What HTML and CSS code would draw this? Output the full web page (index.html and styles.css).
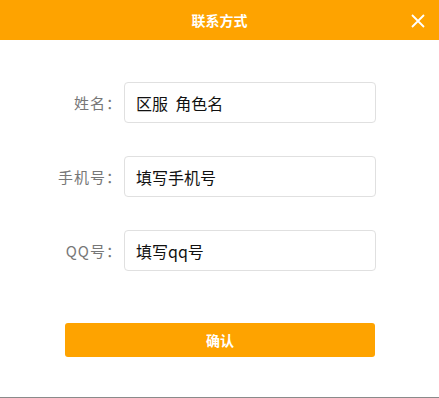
FILE: index.html
```html
<!DOCTYPE html>
<html lang="zh-CN">
<head>
<meta charset="utf-8">
<title>联系方式</title>
<link rel="stylesheet" href="styles.css">
</head>
<body>
<div class="dialog">
  <div class="header">
    <span class="title">联系方式</span>
    <span class="close" aria-label="关闭">
      <svg width="14" height="14" viewBox="0 0 14 14"><path d="M1 1L13 13M13 1L1 13" stroke="#fff" stroke-width="1.8" fill="none"/></svg>
    </span>
  </div>
  <div class="form">
    <div class="row">
      <label class="label">姓名：</label>
      <div class="field">区服&nbsp;&nbsp;角色名</div>
    </div>
    <div class="row">
      <label class="label">手机号：</label>
      <div class="field">填写手机号</div>
    </div>
    <div class="row">
      <label class="label">QQ号：</label>
      <div class="field">填写qq号</div>
    </div>
    <button class="submit">确认</button>
  </div>
</div>
</body>
</html>
```
FILE: styles.css
```css
* { box-sizing: border-box; }
html, body { margin: 0; padding: 0; background: #fff; }
body { font-family: "Noto Sans CJK SC", "Liberation Sans", sans-serif; }
.dialog {
  width: 439px;
  height: 398px;
  display: flex;
  flex-direction: column;
  border-bottom: 1px solid #8a8a8a;
}
.header {
  height: 40px;
  background: #fea300;
  display: flex;
  align-items: center;
  justify-content: center;
  position: relative;
}
.title {
  color: #fff;
  font-size: 14px;
  font-weight: bold;
}
.close {
  position: absolute;
  right: 14px;
  top: 14px;
  width: 14px;
  height: 14px;
  display: flex;
}
.form {
  display: flex;
  flex-direction: column;
  padding-top: 42px;
}
.row {
  display: grid;
  grid-template-columns: 124px 252px;
  align-items: center;
  margin-bottom: 33px;
}
.label {
  text-align: right;
  color: #777;
  font-size: 15px;
  letter-spacing: 1px;
  padding-right: 2px;
}
.field {
  height: 41px;
  border: 1px solid #e0e0e0;
  border-radius: 4px;
  display: flex;
  align-items: center;
  padding-left: 11px;
  font-size: 16px;
  color: #111;
}
.submit {
  margin: 19px 0 0 65px;
  width: 310px;
  height: 34px;
  border: none;
  border-radius: 3px;
  background: #fea300;
  color: #fff;
  font-family: inherit;
  font-size: 14px;
  font-weight: bold;
}
```
